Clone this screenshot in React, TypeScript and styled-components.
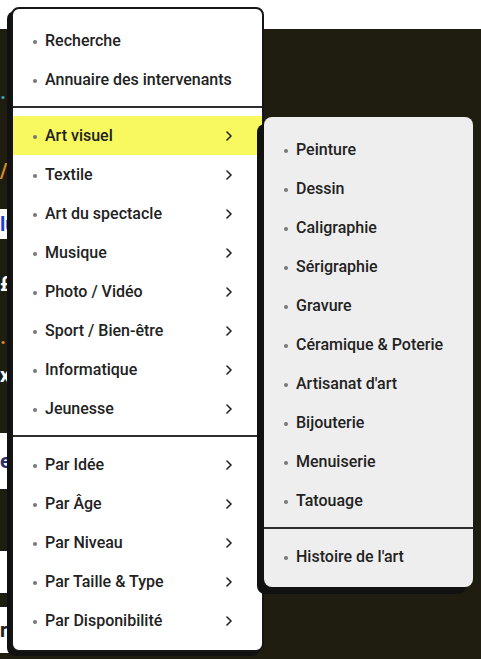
import React from "react";
import styled, { createGlobalStyle } from "styled-components";

const Global = createGlobalStyle`
  html, body { margin: 0; padding: 0; }
  body {
    width: 481px;
    height: 659px;
    overflow: hidden;
    background: #1f1c10;
    font-family: Roboto, "Liberation Sans", Arial, sans-serif;
  }
`;

const Page = styled.div`
  position: relative;
  width: 481px;
  height: 659px;
  overflow: hidden;
  display: flex;
  flex-direction: column;
`;

const TopBar = styled.header`
  height: 29px;
  background: #ffffff;
  flex: none;
`;

const Dark = styled.main`
  flex: 1;
  background: #1f1c10;
  display: flex;
  flex-direction: column;
  align-items: flex-start;
`;

const Peek = styled.div<{ $mt: number; $h: number; $bg?: string; $color: string; $radius?: boolean }>`
  margin-top: ${(p) => p.$mt}px;
  height: ${(p) => p.$h}px;
  width: 120px;
  background: ${(p) => p.$bg ?? "transparent"};
  color: ${(p) => p.$color};
  border-radius: ${(p) => (p.$radius ? "0 6px 6px 0" : "0")};
  display: flex;
  align-items: center;
  justify-content: flex-start;
  font: 700 20px Roboto, "Liberation Sans", sans-serif;
  line-height: 1;
  white-space: nowrap;
`;

const Menu = styled.nav`
  position: absolute;
  top: 7px;
  left: 11px;
`;

const Panel = styled.div`
  width: 249px;
  background: #ffffff;
  border: 2px solid #161616;
  border-radius: 8px;
  box-shadow: -4px 4px 0 #111111;
  padding: 4px 0 3px;
  overflow: hidden;
`;

const SubPanel = styled.div`
  position: absolute;
  top: 110px;
  left: 253px;
  width: 209px;
  background: #eeeeee;
  border-radius: 8px;
  box-shadow: -7px 7px 0 #111111;
  padding: 5px 0 4px;
  overflow: hidden;
`;

const Section = styled.ul`
  list-style: none;
  margin: 0;
  padding: 8px 0 7px;
`;

const Divider = styled.hr`
  margin: 0;
  border: none;
  height: 2px;
  background: #2e2e2e;
`;

const Row = styled.li<{ $active?: boolean }>`
  height: 39px;
  display: flex;
  align-items: center;
  padding: 0 29px 0 20px;
  background: ${(p) => (p.$active ? "#f7f95f" : "transparent")};
  color: #222222;
  font-size: 16px;
  font-weight: 500;
`;

const Dot = styled.span`
  width: 4px;
  height: 4px;
  border-radius: 50%;
  background: #777777;
  margin-right: 8px;
  margin-top: 3px;
  flex: none;
`;

const Label = styled.span`
  flex: 1;
  white-space: nowrap;
`;

const Chevron = () => (
  <svg width="8" height="10" viewBox="0 0 8 10" style={{ flex: "none" }}>
    <polyline points="2,1 6,5 2,9" fill="none" stroke="#222" strokeWidth="1.6" strokeLinecap="round" strokeLinejoin="round" />
  </svg>
);

type Item = { label: string; arrow?: boolean; active?: boolean };

const MenuSection = ({ items }: { items: Item[] }) => (
  <Section>
    {items.map((it) => (
      <Row key={it.label} $active={it.active}>
        <Dot />
        <Label>{it.label}</Label>
        {it.arrow && <Chevron />}
      </Row>
    ))}
  </Section>
);

const main1: Item[] = [{ label: "Recherche" }, { label: "Annuaire des intervenants" }];
const main2: Item[] = [
  { label: "Art visuel", arrow: true, active: true },
  { label: "Textile", arrow: true },
  { label: "Art du spectacle", arrow: true },
  { label: "Musique", arrow: true },
  { label: "Photo / Vidéo", arrow: true },
  { label: "Sport / Bien-être", arrow: true },
  { label: "Informatique", arrow: true },
  { label: "Jeunesse", arrow: true },
];
const main3: Item[] = [
  { label: "Par Idée", arrow: true },
  { label: "Par Âge", arrow: true },
  { label: "Par Niveau", arrow: true },
  { label: "Par Taille & Type", arrow: true },
  { label: "Par Disponibilité", arrow: true },
];
const sub1: Item[] = [
  { label: "Peinture" },
  { label: "Dessin" },
  { label: "Caligraphie" },
  { label: "Sérigraphie" },
  { label: "Gravure" },
  { label: "Céramique & Poterie" },
  { label: "Artisanat d'art" },
  { label: "Bijouterie" },
  { label: "Menuiserie" },
  { label: "Tatouage" },
];
const sub2: Item[] = [{ label: "Histoire de l'art" }];

export default function App() {
  return (
    <>
      <Global />
      <Page>
        <TopBar />
        <Dark>
          <Peek $mt={62} $h={12} $color="#3aa6b5">·</Peek>
          <Peek $mt={60} $h={16} $color="#d98b2b">/</Peek>
          <Peek $mt={30} $h={30} $bg="#ffffff" $color="#1b3fd1">lu</Peek>
          <Peek $mt={32} $h={26} $color="#ffffff">£</Peek>
          <Peek $mt={38} $h={14} $color="#d98b2b">·</Peek>
          <Peek $mt={16} $h={20} $color="#ffffff">x</Peek>
          <Peek $mt={48} $h={56} $bg="#ffffff" $color="#2a2f6a">e</Peek>
          <Peek $mt={62} $h={42} $bg="#ffffff" $color="#222" $radius />
          <Peek $mt={14} $h={46} $bg="#ffffff" $color="#222">r</Peek>
        </Dark>
        <Menu>
          <Panel>
            <MenuSection items={main1} />
            <Divider />
            <MenuSection items={main2} />
            <Divider />
            <MenuSection items={main3} />
          </Panel>
          <SubPanel>
            <MenuSection items={sub1} />
            <Divider />
            <MenuSection items={sub2} />
          </SubPanel>
        </Menu>
      </Page>
    </>
  );
}
